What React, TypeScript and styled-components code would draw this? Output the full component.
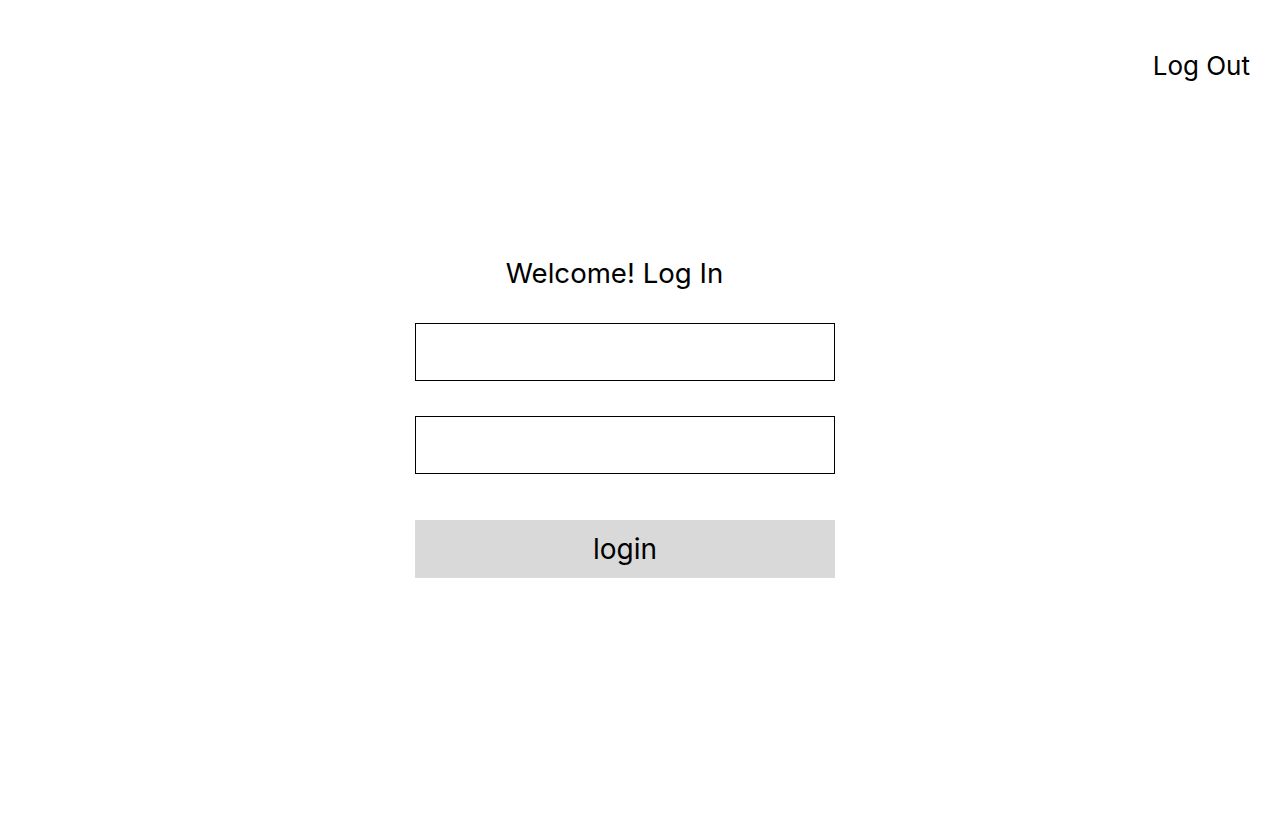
import React from "react";
import styled, { createGlobalStyle } from "styled-components";

const Global = createGlobalStyle`
  html, body { margin: 0; padding: 0; background: #ffffff; }
  body { font-family: Inter, "Noto Sans", sans-serif; color: #000; }
`;

const Page = styled.div`
  width: 1280px;
  height: 832px;
  display: flex;
  flex-direction: column;
`;

const Header = styled.header`
  display: flex;
  justify-content: flex-end;
  padding: 50px 30px 0 0;
`;

const LogOut = styled.button`
  border: none;
  background: none;
  padding: 0;
  font-family: Inter, sans-serif;
  font-size: 26px;
  line-height: 31px;
  color: #000;
  cursor: pointer;
`;

const Main = styled.main`
  display: flex;
  justify-content: center;
  padding: 173px 30px 0 0;
`;

const Form = styled.form`
  width: 420px;
  display: flex;
  flex-direction: column;
  align-items: stretch;
`;

const Title = styled.h1`
  margin: 2px 0 33px;
  padding-right: 21px;
  font-size: 27.6px;
  font-weight: 400;
  line-height: 34px;
  text-align: center;
`;

const Input = styled.input<{ $gap: number }>`
  box-sizing: border-box;
  height: 58px;
  width: 100%;
  border: 1px solid #000;
  border-radius: 0;
  margin: 0 0 ${(p) => p.$gap}px;
  padding: 0 12px;
  font-family: Inter, sans-serif;
  font-size: 18px;
  outline: none;
`;

const Submit = styled.button`
  height: 58px;
  width: 100%;
  border: none;
  background: #d9d9d9;
  font-family: Inter, sans-serif;
  font-size: 28px;
  line-height: 34px;
  color: #000;
  padding: 0;
  cursor: pointer;
`;

export default function App() {
  return (
    <Page>
      <Global />
      <Header>
        <LogOut type="button">Log Out</LogOut>
      </Header>
      <Main>
        <Form onSubmit={(e) => e.preventDefault()}>
          <Title>Welcome! Log In</Title>
          <Input $gap={35} type="text" />
          <Input $gap={46} type="password" />
          <Submit type="submit">login</Submit>
        </Form>
      </Main>
    </Page>
  );
}
